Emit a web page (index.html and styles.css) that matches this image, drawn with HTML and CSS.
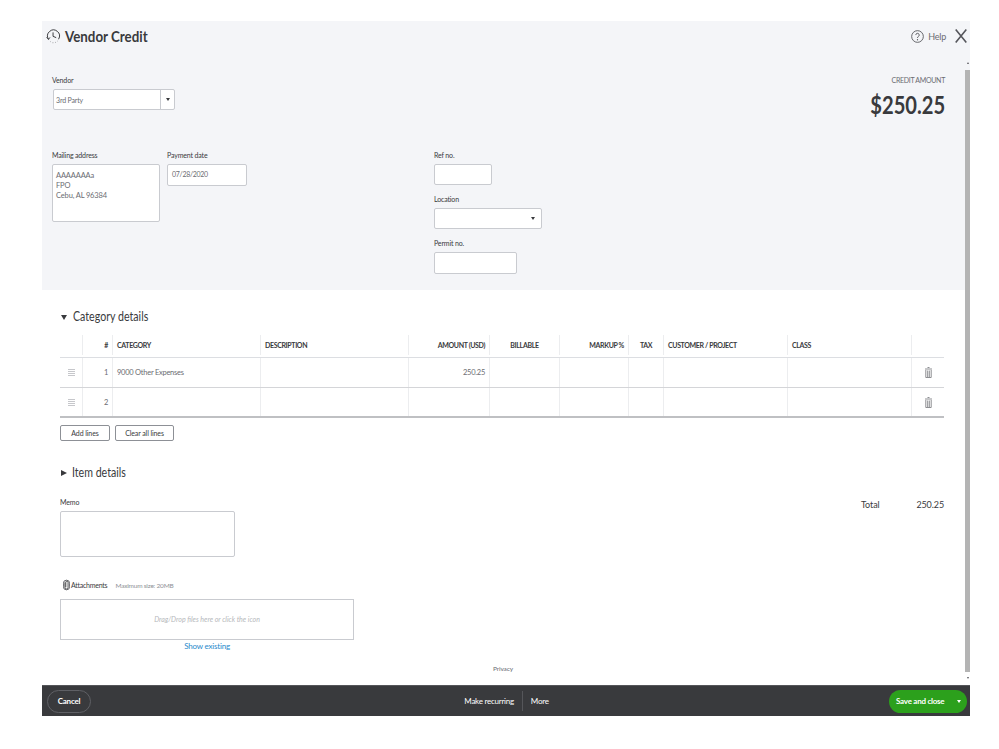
FILE: index.html
```html
<!DOCTYPE html>
<html lang="en">
<head>
<meta charset="utf-8">
<title>Vendor Credit</title>
<link rel="stylesheet" href="styles.css">
</head>
<body>
<div class="modal">
  <div class="main">
    <section class="panel">
      <header class="titlebar">
        <svg class="history" viewBox="0 1 20 20" width="15" height="17"><path d="M3.200 14.500A8 8 0 1 1 17 14.200" fill="none" stroke="#393a3d" stroke-width="1.300" stroke-linecap="round"/><path d="M5.500 17.500l.4.3M9 19.300h.6M12.800 18.800l.5-.2M15.700 16.800l.3-.3" fill="none" stroke="#393a3d" stroke-width="1.300"/><path d="M9.400 5.500v5.300l4.200 1.700" fill="none" stroke="#393a3d" stroke-width="1.300"/><path d="M.8 11.800l2.500 3.100 2-2.700" fill="none" stroke="#393a3d" stroke-width="1.200"/></svg>
        <h1 class="title"><span class="title-txt">Vendor Credit</span></h1>
        <div class="help">
          <svg viewBox="0 0 16 16" width="13" height="13"><circle cx="8" cy="8" r="7.200" fill="none" stroke="#55565b" stroke-width="1.100"/><path d="M5.900 6.200a2.100 2.100 0 1 1 3.200 1.800c-.8.500-1.100.9-1.100 1.800" fill="none" stroke="#55565b" stroke-width="1.200"/><circle cx="8" cy="12" r=".8" fill="#55565b"/></svg>
          <span>Help</span>
        </div>
        <svg class="close" viewBox="0 0 12 14" width="12" height="14"><path d="M.7.5l10.600 13M11.300.5L.7 13.500" fill="none" stroke="#55565b" stroke-width="1.600"/></svg>
      </header>
      <div class="toprow">
        <div class="field">
          <label class="lbl">Vendor</label>
          <div class="combo"><span class="val">3rd Party</span><span class="combo-btn"><i class="caret"></i></span></div>
        </div>
        <div class="credit">
          <div class="credit-lbl">CREDIT AMOUNT</div>
          <div class="credit-val">$250.25</div>
        </div>
      </div>
      <div class="fieldrow">
        <div class="field">
          <label class="lbl">Mailing address</label>
          <div class="box address">AAAAAAAa<br>FPO<br>Cebu, AL 96384</div>
        </div>
        <div class="field date-field">
          <label class="lbl">Payment date</label>
          <div class="box date">07/28/2020</div>
        </div>
        <div class="refcol">
          <div class="field">
            <label class="lbl">Ref no.</label>
            <div class="box ref"></div>
          </div>
          <div class="field">
            <label class="lbl">Location</label>
            <div class="box location"><i class="caret"></i></div>
          </div>
          <div class="field">
            <label class="lbl">Permit no.</label>
            <div class="box permit"></div>
          </div>
        </div>
      </div>
    </section>
    <section class="body">
      <h2 class="section-head"><i class="tri-down"></i><span class="head-txt">Category details</span></h2>
      <div class="table">
        <div class="tr head">
          <div class="c"></div><div class="c r">#</div><div class="c">CATEGORY</div><div class="c">DESCRIPTION</div><div class="c r">AMOUNT (USD)</div><div class="c ctr">BILLABLE</div><div class="c r">MARKUP %</div><div class="c ctr">TAX</div><div class="c">CUSTOMER / PROJECT</div><div class="c">CLASS</div><div class="c"></div>
        </div>
        <div class="tr row">
          <div class="c ctr"><svg class="grip" viewBox="0 0 7 7" width="7" height="7"><path d="M0 .5h7M0 2.500h7M0 4.500h7M0 6.500h7" stroke="#c6c7cb" stroke-width="1"/></svg></div><div class="c r">1</div><div class="c">9000 Other Expenses</div><div class="c"></div><div class="c r">250.25</div><div class="c"></div><div class="c"></div><div class="c"></div><div class="c"></div><div class="c"></div>
          <div class="c ctr"><svg class="trash" viewBox="0 0 7 11" width="7" height="11"><path d="M2.500.5h2M0 2h7M.8 3v7.500h5.400V3M2.700 3.500v7M4.300 3.500v7" fill="none" stroke="#8d8e92" stroke-width="1"/></svg></div>
        </div>
        <div class="tr row last">
          <div class="c ctr"><svg class="grip" viewBox="0 0 7 7" width="7" height="7"><path d="M0 .5h7M0 2.500h7M0 4.500h7M0 6.500h7" stroke="#c6c7cb" stroke-width="1"/></svg></div><div class="c r">2</div><div class="c"></div><div class="c"></div><div class="c"></div><div class="c"></div><div class="c"></div><div class="c"></div><div class="c"></div><div class="c"></div>
          <div class="c ctr"><svg class="trash" viewBox="0 0 7 11" width="7" height="11"><path d="M2.500.5h2M0 2h7M.8 3v7.500h5.400V3M2.700 3.500v7M4.300 3.500v7" fill="none" stroke="#8d8e92" stroke-width="1"/></svg></div>
        </div>
      </div>
      <div class="btnrow">
        <button class="btn add">Add lines</button>
        <button class="btn clear">Clear all lines</button>
      </div>
      <h2 class="section-head item-head"><i class="tri-right"></i><span class="head-txt">Item details</span></h2>
      <div class="memo-row">
        <div class="field">
          <label class="lbl memo-lbl">Memo</label>
          <div class="box memo"></div>
        </div>
        <div class="total"><span>Total</span><span>250.25</span></div>
      </div>
      <div class="attach-head">
        <svg viewBox="0 0 8 12" width="7" height="12"><path d="M2.200 3v5.800a1.800 1.800 0 0 0 3.600 0V2.800a1.300 1.300 0 0 0-2.600 0V8.500" fill="none" stroke="#393a3d" stroke-width="1"/><rect x=".5" y=".5" width="7" height="11" rx="3.400" fill="none" stroke="#55565b" stroke-width="1"/></svg>
        <span class="attach-lbl">Attachments</span>
        <span class="attach-max">Maximum size: 20MB</span>
      </div>
      <div class="attach-wrap">
        <div class="drop">Drag/Drop files here or click the icon</div>
        <a class="show">Show existing</a>
      </div>
      <div class="privacy">Privacy</div>
    </section>
    <div class="scrollbar"><i class="arrow-up"></i><i class="thumb"></i><i class="arrow-down"></i></div>
  </div>
  <footer class="footer">
    <button class="cancel">Cancel</button>
    <div class="mid"><span class="recurring">Make recurring</span><span class="more">More</span></div>
    <div class="save"><span class="save-txt">Save and close</span><i class="save-caret"></i></div>
  </footer>
</div>
</body>
</html>
```

FILE: styles.css
```css
* { box-sizing: border-box; }
html, body { margin: 0; padding: 0; background: #fff; }
body { font-family: Lato, "Noto Sans", sans-serif; color: #393a3d; width: 999px; height: 749px; overflow: hidden; padding: 21px 0 0 42px; }
.modal { width: 928px; height: 695px; display: flex; flex-direction: column; }
.main { position: relative; flex: 1; display: flex; flex-direction: column; }
.panel { height: 269px; background: #f4f5f8; padding: 0 25px 0 10px; }
.titlebar { display: flex; align-items: center; height: 30px; margin: 0 -24px 0 -6px; }
.history { margin: 0 4px 0 0; }
.title { margin: 0; font-size: 15.500px; font-weight: 700; color: #393a3d; flex: 1; }
.title-txt { display: inline-block; transform: scaleX(.86); transform-origin: left center; }
.help { display: flex; align-items: center; gap: 4px; font-size: 9px; color: #6b6c72; margin-right: 9px; letter-spacing: -.2px; }
.close { margin-right: 2px; }
.toprow { display: flex; justify-content: space-between; margin-top: 25px; height: 99px; }
.lbl { display: block; font-size: 7px; line-height: 9px; color: #393a3d; letter-spacing: -.15px; }
.field .lbl { margin-bottom: 4px; }
.combo { display: flex; width: 122px; height: 21px; margin-left: 1px; background: #fff; border: 1px solid #c9cbd0; border-radius: 2px; align-items: center; }
.val { flex: 1; font-size: 7px; color: #6b6c72; padding-left: 2px; letter-spacing: -.15px; }
.combo-btn { width: 14px; height: 100%; border-left: 1px solid #c9cbd0; display: flex; align-items: center; justify-content: center; }
.caret { display: block; width: 0; height: 0; border-left: 2.500px solid transparent; border-right: 2.500px solid transparent; border-top: 3px solid #393a3d; }
.credit { text-align: right; }
.credit-lbl { font-size: 7px; line-height: 9px; color: #6b6c72; letter-spacing: -.3px; }
.credit-val { font-size: 24px; line-height: 28px; font-weight: 700; color: #393a3d; margin-top: 6px; transform: scaleX(.84); transform-origin: right center; }
.fieldrow { display: flex; margin-top: -24px; }
.box { background: #fff; border: 1px solid #c9cbd0; border-radius: 2px; font-size: 7.500px; color: #6b6c72; letter-spacing: -.15px; }
.address { width: 108px; height: 58px; padding: 6px 3px; line-height: 10px; }
.date-field { margin-left: 7px; }
.date { width: 80px; height: 22px; font-size: 7px; line-height: 19px; padding-left: 4px; letter-spacing: -.3px; }
.refcol { margin-left: 187px; display: flex; flex-direction: column; gap: 10px; }
.ref { width: 58px; height: 21px; }
.location { width: 108px; height: 21px; display: flex; align-items: center; justify-content: flex-end; padding-right: 6px; }
.permit { width: 83px; height: 22px; }
.body { flex: 1; padding: 19px 26px 0 18px; background: #fff; }
.section-head { margin: 0; display: flex; align-items: center; font-size: 12.500px; font-weight: 400; line-height: 16px; color: #393a3d; height: 16px; }
.head-txt { display: inline-block; transform: scaleX(.85); transform-origin: left center; }
.tri-down { width: 0; height: 0; border-left: 3px solid transparent; border-right: 3px solid transparent; border-top: 5px solid #393a3d; margin: 0 6px 0 1px; }
.tri-right { width: 0; height: 0; border-top: 3px solid transparent; border-bottom: 3px solid transparent; border-left: 6px solid #393a3d; margin: 0 5px 0 1px; }
.table { margin-top: 10px; width: 884px; }
.tr { display: grid; grid-template-columns: 23px 30px 148px 148px 81px 70px 69px 35px 124px 124px 32px; }
.head { height: 23px; padding-bottom: 2px; border-bottom: 1px solid #dcdee2; font-size: 7px; font-weight: 700; color: #393a3d; }
.head .c { letter-spacing: -.35px; }
.row { height: 30px; border-bottom: 1px solid #d4d5d8; font-size: 7.500px; color: #6b6c72; }
.row .c { letter-spacing: -.25px; }
.row.last { border-bottom: 2px solid #bfc0c3; }
.c { display: flex; align-items: center; padding: 0 4px; border-right: 1px solid #ecedef; white-space: nowrap; }
.c:last-child { border-right: 0; }
.r { justify-content: flex-end; }
.ctr { justify-content: center; }
.btnrow { display: flex; gap: 5px; margin-top: 7px; }
.btn { height: 16px; padding: 0; background: #fff; border: 1px solid #8d9096; border-radius: 2px; font-family: inherit; font-size: 7px; color: #393a3d; letter-spacing: -.1px; }
.add { width: 50px; }
.clear { width: 59px; }
.item-head { margin-top: 24px; }
.memo-row { display: flex; justify-content: space-between; margin-top: 17px; }
.memo { width: 175px; height: 46px; }
.total { display: flex; font-size: 9px; color: #393a3d; width: 83px; justify-content: space-between; height: 14px; margin-top: 1px; letter-spacing: -.1px; }
.attach-head { display: flex; align-items: center; height: 14px; margin: 21px 0 0 3px; gap: 1px; }
.attach-lbl { font-size: 7px; color: #393a3d; letter-spacing: -.25px; }
.attach-max { font-size: 6.500px; color: #8d9096; margin-left: 7px; letter-spacing: -.2px; }
.attach-wrap { width: 294px; margin-top: 7px; text-align: center; }
.drop { height: 41px; line-height: 39px; border: 1px solid #c9cbd0; font-size: 7px; font-style: italic; color: #b5b7bb; }
.show { display: block; font-size: 8px; color: #2a8bcc; margin-top: 1px; line-height: 11px; letter-spacing: -.2px; }
.privacy { width: 884px; text-align: center; font-size: 6.500px; color: #6b6c72; margin-top: 13px; letter-spacing: -.1px; margin-left: 1px; }
.scrollbar { position: absolute; top: 39px; right: 0; bottom: 0; width: 5px; display: flex; flex-direction: column; align-items: center; }
.arrow-up { width: 0; height: 0; margin-top: 2px; border-left: 1.500px solid transparent; border-right: 1.500px solid transparent; border-bottom: 2px solid #55565b; }
.thumb { width: 5px; height: 602px; margin-top: 6px; background: #b4b4b4; }
.arrow-down { width: 0; height: 0; margin-top: 5px; border-left: 1.500px solid transparent; border-right: 1.500px solid transparent; border-top: 2px solid #55565b; }
.footer { height: 31px; background: #393a3d; display: flex; align-items: center; color: #fff; padding: 0 3px 0 5px; border-top: 1px solid #55565a; }
.cancel { width: 44px; height: 23px; background: transparent; border: 1px solid #5f6065; border-radius: 12px; color: #fff; font-family: inherit; font-size: 8px; font-weight: 700; padding: 0; letter-spacing: -.2px; }
.mid { flex: 1; display: flex; justify-content: center; align-items: center; font-size: 8px; margin-left: 33px; letter-spacing: -.25px; }
.recurring { padding-right: 8px; border-right: 1px solid #55565a; line-height: 20px; }
.more { padding-left: 8px; }
.save { display: flex; align-items: center; width: 78px; height: 23px; background: #2ca01c; border-radius: 12px; font-size: 8px; font-weight: 700; padding-left: 7px; letter-spacing: -.25px; }
.save-txt { flex: 1; }
.save-caret { width: 0; height: 0; margin-right: 6px; border-left: 2.500px solid transparent; border-right: 2.500px solid transparent; border-top: 3px solid #fff; }
```
